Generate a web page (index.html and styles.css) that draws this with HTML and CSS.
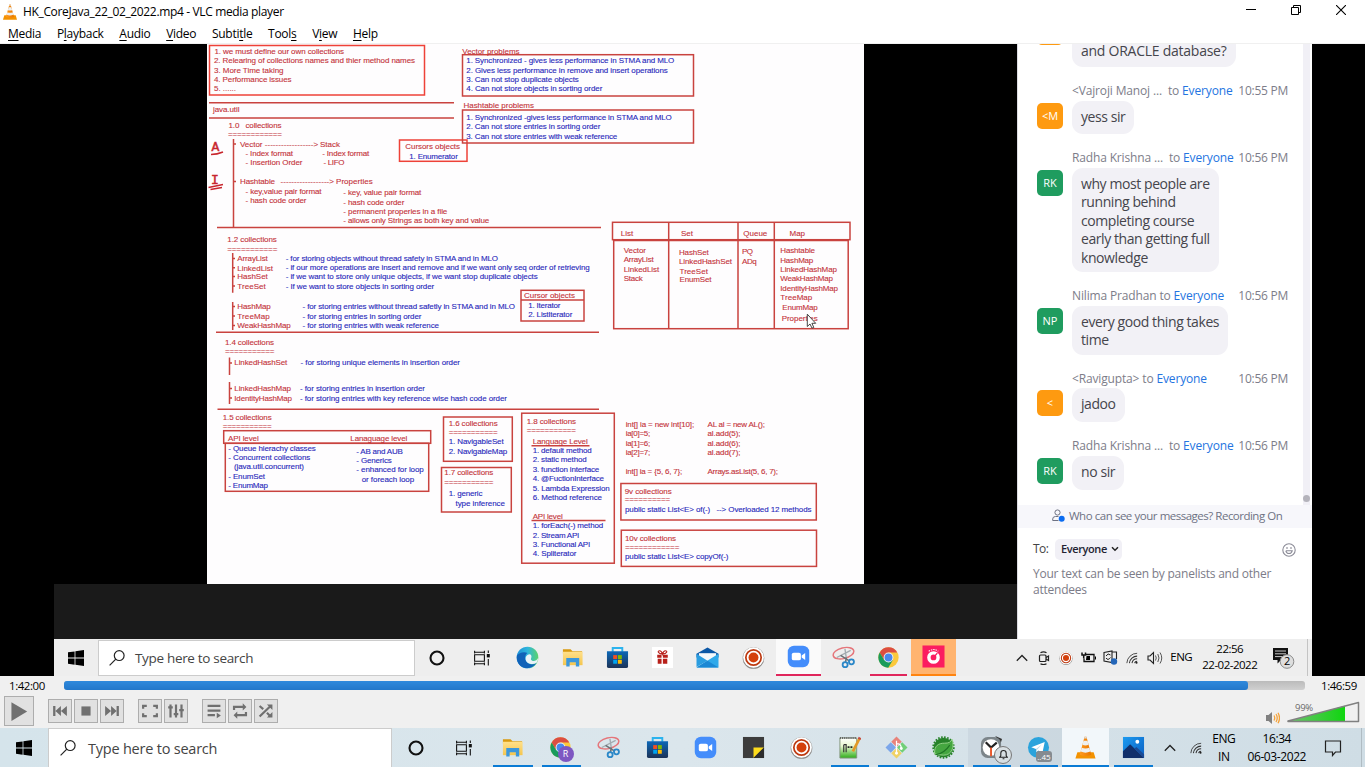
FILE: index.html
```html
<!DOCTYPE html>
<html lang="en">
<head>
<meta charset="utf-8">
<title>HK_CoreJava_22_02_2022.mp4 - VLC media player</title>
<link rel="stylesheet" href="styles.css">
</head>
<body>
<svg class="defs" aria-hidden="true">
  <defs>
    <linearGradient id="gEdge" x1="0" y1="0" x2="1" y2="0"><stop offset="0" stop-color="#1b8fd8"/><stop offset=".5" stop-color="#2fb5dc"/><stop offset="1" stop-color="#5bd36b"/></linearGradient>
    <linearGradient id="gStore" x1="0" y1="0" x2="0" y2="1"><stop offset="0" stop-color="#0c68b8"/><stop offset="1" stop-color="#1d3357"/></linearGradient>
    <linearGradient id="gFolder" x1="0" y1="0" x2="0" y2="1"><stop offset="0" stop-color="#ffe08a"/><stop offset="1" stop-color="#f5c64f"/></linearGradient>
    <linearGradient id="gCone" x1="0" y1="0" x2="1" y2="0"><stop offset="0" stop-color="#ff9a1f"/><stop offset="1" stop-color="#e87600"/></linearGradient>
    <linearGradient id="gPhoto" x1="0" y1="0" x2="1" y2="1"><stop offset="0" stop-color="#1d9bf0"/><stop offset="1" stop-color="#0a5ec2"/></linearGradient>
    <linearGradient id="gVol" x1="0" y1="0" x2="1" y2="0"><stop offset="0" stop-color="#6fbf6f"/><stop offset="1" stop-color="#0fd60f"/></linearGradient>
    <linearGradient id="gPad" x1="0" y1="0" x2="0" y2="1"><stop offset="0" stop-color="#fff"/><stop offset=".4" stop-color="#e9f7d0"/><stop offset="1" stop-color="#2fae1a"/></linearGradient>
    <symbol id="win" viewBox="0 0 16 16"><path d="M0 2.3 6.6 1.4V7.6H0zM7.4 1.3 16 0V7.6H7.4zM0 8.4H6.6V14.7L0 13.8zM7.4 8.4H16V16L7.4 14.8z"/></symbol>
    <symbol id="mag" viewBox="0 0 16 16"><g fill="none" stroke="currentColor" stroke-width="1.2"><circle cx="10.2" cy="5.6" r="4.9"/><path d="M6.8 9.2.6 15.4"/></g></symbol>
    <symbol id="ring" viewBox="0 0 16 16"><circle cx="8" cy="8" r="6.5" fill="none" stroke="#111" stroke-width="2.1"/></symbol>
    <symbol id="taskview" viewBox="0 0 16 16"><g fill="none" stroke="#111" stroke-width="1.1"><path d="M.6 3.500V.8M.6 2.200H10.400M10.400.8V3.500M.6 15.200V12.500M.6 13.800H10.400M10.400 15.200V12.500M.6 4.800H10.400V11.200H.6zM14.300.5V3M14.300 9V15.500"/><path d="M14.300 4V7.400" stroke-width="3"/></g></symbol>
    <symbol id="edge" viewBox="0 0 24 24"><circle cx="12" cy="12" r="11.300" fill="url(#gEdge)"/><path d="M1 10C3 7 8 5.400 12 7.200 9 9 8.400 14 12 17.500 15 20 19 19.500 21.400 17.600 18 24 8 25 3.500 19.600 1 16.500.500 13 1 10z" fill="#1062b8"/><path d="M12 9.500C14.500 7.500 16.800 9.500 16 12 15.500 13.500 15 14.500 17 15.400 19 16.200 22 15 23 12.600 23 15 22.500 16.500 21.400 17.600 17 20.500 10 18 10 13.500 10 11.500 10.700 10.500 12 9.500z" fill="#e9f3f8"/></symbol>
    <symbol id="folder" viewBox="0 0 24 24"><path d="M2 3.500H10L12 5.500H22V8H2z" fill="#d99a10"/><path d="M2 6H22.500V20H2z" fill="url(#gFolder)"/><path d="M5.500 21.500V12.500H19V21.500H15.500V17H9V21.500z" fill="#3b97dc"/></symbol>
    <symbol id="store" viewBox="0 0 24 24"><path d="M7 6V2H17V6" fill="none" stroke="#2bb3ee" stroke-width="2"/><path d="M1 5.500H23V21Q23 23 21 23H3Q1 23 1 21z" fill="url(#gStore)"/><path d="M7.500 9.500H11.600V13.600H7.500z" fill="#f25022"/><path d="M12.400 9.500H16.500V13.600H12.400z" fill="#7fba00"/><path d="M7.500 14.400H11.600V18.500H7.500z" fill="#00a4ef"/><path d="M12.400 14.400H16.500V18.500H12.400z" fill="#ffb900"/></symbol>
    <symbol id="gift" viewBox="0 0 24 24"><path d="M1 1H23V23H1z" fill="#fff"/><path d="M6.500 9H11V12.300H6.500zM12.400 9H17.500V12.300H12.400zM7 13.200H11V18.500H7zM12.400 13.200H17V18.500H12.400z" fill="#b8201a"/><path d="M12 8.500C7 8 6.500 5 9 5 11 5 12 8.500 12 8.500 12 8.500 13 5 15 5 17.500 5 17 8 12 8.500z" fill="none" stroke="#b8201a" stroke-width="1.200"/></symbol>
    <symbol id="mail" viewBox="0 0 24 24"><path d="M.500 8 12 1.500 23.500 8V12H.500z" fill="#0b57a6"/><path d="M3 7.500H21V16H3z" fill="#f4f8fb"/><path d="M.500 8 12 15.500.500 22z" fill="#2a9de0"/><path d="M23.500 8V22.500H.500z" fill="#2fa9ea"/><path d="M12 15.500.500 22.500H23.500z" fill="#1b88d4"/></symbol>
    <symbol id="rec" viewBox="0 0 24 24"><circle cx="12" cy="12.500" r="11.300" fill="#8c8a88"/><circle cx="12" cy="12" r="10.800" fill="#fff"/><circle cx="12" cy="12" r="8" fill="none" stroke="#bd3a12" stroke-width="1.800"/><circle cx="12" cy="12" r="5.200" fill="#d4400c"/></symbol>
    <symbol id="zoom" viewBox="0 0 24 24"><rect x=".8" y=".8" width="22.400" height="22.400" rx="6.500" fill="#448dfb"/><rect x="5" y="8" width="9.500" height="8" rx="2" fill="#fff"/><path d="M15.300 11 19 8.300V15.700L15.300 13z" fill="#fff"/></symbol>
    <symbol id="snip" viewBox="0 0 24 24"><g fill="none"><ellipse cx="12" cy="7.500" rx="11" ry="5.600" transform="rotate(-14 12 7.500)" stroke="#e5757a" stroke-width="1.500"/><path d="M5 12 19.500 4.500M13.500 3 15 13" stroke="#a3abb0" stroke-width="1.400"/><path d="M9 9.800 18 15.500M15 12 14 17" stroke="#6b7276" stroke-width="1.600"/><circle cx="13.700" cy="19.500" r="2.600" stroke="#2a87c8" stroke-width="1.900"/><circle cx="20.300" cy="16.500" r="2.600" stroke="#2a87c8" stroke-width="1.900"/></g></symbol>
    <symbol id="chrome" viewBox="0 0 24 24"><circle cx="12" cy="12" r="10.600" fill="#fbc93c"/><path d="M2.800 6.700A10.600 10.600 0 0 1 21.200 6.700H12L7.400 14.600z" fill="#dc4e41"/><path d="M2.800 6.700A10.600 10.600 0 0 0 11.700 22.600L16.600 14.600H7.400z" fill="#1a9b5b"/><circle cx="12" cy="12" r="5.100" fill="#f1f1f1"/><circle cx="12" cy="12" r="4.100" fill="#4a88ee"/></symbol>
    <symbol id="gauge" viewBox="0 0 24 24"><path d="M.5.5H23.500V23.500H.500z" fill="#fb1d60"/><circle cx="12" cy="13" r="4.800" fill="none" stroke="#fff" stroke-width="3.600"/><path d="M12 13 16 8.500" stroke="#fb1d60" stroke-width="1.500"/><path d="M7 6.500Q12 3 17 6.500" fill="none" stroke="#fff" stroke-width="1.100" stroke-dasharray="1.500 1"/></symbol>
    <symbol id="sticky" viewBox="0 0 24 24"><path d="M1 1H23V23H1z" fill="#3c3c3c"/><path d="M12 12H23L12 23z" fill="#fddc1c"/><path d="M23 12V23H12z" fill="#2d2d2d"/></symbol>
    <symbol id="npp" viewBox="0 0 24 24"><path d="M2 2H19.500V23H2z" fill="url(#gPad)" stroke="#82957c"/><path d="M2 2H19.500" stroke="#666" stroke-width="2" stroke-dasharray="1.200 1"/><path d="M6 9V17M6 9H8.500V17" fill="none" stroke="#333" stroke-width="1.200"/><path d="M10 11.500H16" stroke="#222" stroke-width="1.800" stroke-dasharray="2 1"/><path d="M22.500 2.500 15.500 16" stroke="#e39a25" stroke-width="2.800"/><path d="M23 1.500 22 3.500" stroke="#c54a40" stroke-width="3"/></symbol>
    <symbol id="git" viewBox="0 0 24 24"><path d="M12 .5 17.500 6 12 11.500 6.500 6z" fill="#e8837a"/><path d="M6 6.500 11.500 12 6 17.500.500 12z" fill="#7ba6ea"/><path d="M18 6.500 23.500 12 18 17.500 12.500 12z" fill="#72cf78"/><path d="M12 12.500 17.500 18 12 23.500 6.500 18z" fill="#f0d264"/><path d="M12 5V18M12 8Q17 8 17 13" stroke="#fff" stroke-width="1.300" fill="none"/><circle cx="12" cy="18" r="1.500" fill="#fff"/><circle cx="17" cy="13" r="1.500" fill="#fff"/></symbol>
    <symbol id="spring" viewBox="0 0 24 24"><circle cx="12" cy="12" r="10.200" fill="#27822a"/><circle cx="12" cy="12" r="10.800" fill="none" stroke="#27822a" stroke-width="1.800" stroke-dasharray="1.700 1.500"/><path d="M2.800 18.500C2 10 7 7.500 13 7.500 17.500 7.500 19.500 6.500 21 3.500 23.500 11 21 20 12 20 8.500 20 6 19.300 2.800 18.500z" fill="#45a640" stroke="#9ed891" stroke-width=".9"/><path d="M4 19.500Q13 18 18.500 9.500" fill="none" stroke="#1f7524" stroke-width="1.200"/></symbol>
    <symbol id="clock" viewBox="0 0 24 24"><path d="M16 0 23 3 21 9z" fill="#333"/><rect x="1" y="1" width="21" height="22" rx="7" fill="#7c858a"/><circle cx="11.500" cy="12" r="8.700" fill="#fff"/><path d="M6 6.500 11.500 12 17.500 7" fill="none" stroke="#222" stroke-width="2.300"/><path d="M11.500 12V21" stroke="#e8572a" stroke-width="2"/></symbol>
    <symbol id="telegram" viewBox="0 0 24 24"><circle cx="12" cy="12" r="11" fill="#2ba3dc"/><path d="M4.500 11.800 18.500 6.200 16 18 12 15 9.800 17 9.300 13.500z" fill="#fff"/><path d="M9.300 13.500 15.500 8.800 10.500 14.400 9.800 17z" fill="#b8d8e8"/></symbol>
    <symbol id="vlc" viewBox="0 0 24 24"><path d="M3.500 17H20.500L22.500 23.500H1.500z" fill="#f39200"/><path d="M11 .8H13L18 19.500Q12 22 6 19.500z" fill="url(#gCone)"/><path d="M9.900 5H14.100L15.200 9.200Q12 10.500 8.800 9.200zM8 12.300Q12 13.800 16 12.300L17 16.200Q12 18.500 7 16.200z" fill="#edf0f1"/><path d="M11 .8H13L13.500 2.500H10.500z" fill="#ddd"/></symbol>
    <symbol id="photos" viewBox="0 0 24 24"><path d="M1 1H23V23H1z" fill="url(#gPhoto)"/><path d="M1 16 8.500 8.500 23 23H1z" fill="#12306b"/><path d="M13 13 15 11.500 23 19V23z" fill="#1b4a94"/><circle cx="16" cy="6" r="2" fill="#fff"/></symbol>
    <symbol id="chev" viewBox="0 0 12 12"><path d="M.8 8.700 6 3.500 11.200 8.700" fill="none" stroke="#222" stroke-width="1.300"/></symbol>
    <symbol id="wifi" viewBox="0 0 14 14"><g fill="none" stroke="#333" stroke-width="1.200"><path d="M1 13A12 12 0 0 1 13 1.500" stroke-width="1"/><path d="M4 13A9 9 0 0 1 13 4.800M7 13A6 6 0 0 1 13 8M10 13A3 3 0 0 1 13 10.800"/></g><circle cx="12.300" cy="12.500" r="1.200" fill="#222"/></symbol>
  </defs>
</svg>

<div class="window">
  <header class="titlebar">
    <svg class="app-icon"><use href="#vlc"/></svg>
    <span class="title">HK_CoreJava_22_02_2022.mp4 - VLC media player</span>
    <div class="window-buttons">
      <svg viewBox="0 0 10 10"><path d="M0 4.500H10" stroke="#000"/></svg>
      <svg viewBox="0 0 10 10"><path d="M.5 2.500H7.500V9.500H.500zM2.500 2.500V.5H9.500V7.500H7.500" fill="none" stroke="#000"/></svg>
      <svg viewBox="0 0 10 10"><path d="M0 0 10 10M10 0 0 10" stroke="#000" stroke-width="1.100"/></svg>
    </div>
  </header>
  <nav class="menubar">
    <span><u>M</u>edia</span><span>P<u>l</u>ayback</span><span><u>A</u>udio</span><span><u>V</u>ideo</span><span>Subti<u>t</u>le</span><span>Tool<u>s</u></span><span>V<u>i</u>ew</span><span><u>H</u>elp</span>
  </nav>

  <main class="video">
    <div class="stage">
      <div class="share">
        <svg class="board" viewBox="207 44 657 540">
          <g class="lines">
            <g class="bright">
              <rect x="209.500" y="45.500" width="215" height="49.500"/>
              <rect x="399.500" y="140" width="67.500" height="21.300"/>
            </g>
            <path d="M209 102.700H454M209 118H454M217 227.500H601M216 332.300H599M217.500 409.200H599"/>
            <path d="M233.500 139V228M233.500 144H236M233.500 181.500H236M232.700 253V292.700M232.700 302V330M232.700 258.500H235M232.700 267.800H235M232.700 276.500H235M232.700 286H235M232.700 306.500H235M232.700 316H235M232.700 325.500H235M229.500 357.500V375M229.500 382V404M229.500 363H232M229.500 388.500H232M229.500 398H232"/>
            <rect x="462.500" y="54.700" width="231" height="41.300"/>
            <rect x="462.500" y="110" width="231" height="33"/>
            <rect x="521" y="290.300" width="63" height="30.700"/><path d="M521 300H584"/>
            <rect x="612.500" y="222.300" width="237.500" height="17.400"/>
            <rect x="613.700" y="240.500" width="234.500" height="88.200"/>
            <path d="M668.700 222V328.500M738 222V328.500M774.300 222V328.500"/>
            <rect x="223.700" y="430.700" width="207" height="12.600"/>
            <rect x="225.300" y="443.300" width="203.400" height="48"/>
            <rect x="443.500" y="417" width="68.800" height="44.300"/>
            <rect x="441.500" y="467.500" width="69.800" height="44.500"/>
            <rect x="521.700" y="413.200" width="92.600" height="150"/>
            <path d="M531.500 445.700H589.500M531.500 520.500H605.500"/>
            <rect x="620.900" y="483.500" width="195.400" height="36.500"/>
            <rect x="621.300" y="530.200" width="195.200" height="36.200"/>
            <path class="pen" d="M211 154.500Q217 154.500 223 152M208.500 187.500 223 184.500M210.500 189.500 222 187.500"/>
          </g>
          <text class="hand" x="211.500" y="150.500">A</text>
          <text class="hand" x="211" y="184">I</text>
          <g class="red">
            <text x="214.500" y="54" textLength="129.500">1. we must define our own collections</text>
            <text x="214" y="63.300" textLength="201">2. Relearing of collections names and thier method names</text>
            <text x="214" y="72.700" textLength="69.500">3. More Time taking</text>
            <text x="214" y="82" textLength="77.500">4. Performance issues</text>
            <text x="214" y="91.300" textLength="22">5. ......</text>
            <text x="213" y="112" textLength="26.500">java.util</text>
            <text x="228.500" y="127.500" textLength="53">1.0 &#160; collections</text>
            <text x="228" y="136.500" textLength="54">============</text>
            <text x="240" y="146.500" textLength="22.500">Vector</text>
            <text x="264.700" y="146.500" textLength="53.500">------------------&gt;</text>
            <text x="320" y="146.500" textLength="20">Stack</text>
            <text x="245.500" y="155.700" textLength="47.500">- Index format</text>
            <text x="322.300" y="155.500" textLength="47">- Index format</text>
            <text x="245.500" y="165" textLength="57">- Insertion Order</text>
            <text x="323.500" y="165" textLength="21">- LIFO</text>
            <text x="240" y="184.300" textLength="35">Hashtable</text>
            <text x="280.500" y="184.300" textLength="53.500">------------------&gt;</text>
            <text x="336" y="184.300" textLength="36.800">Properties</text>
            <text x="245.500" y="193.500" textLength="76">- key,value pair format</text>
            <text x="245.500" y="203.300" textLength="61">- hash code order</text>
            <text x="343.300" y="195" textLength="78">- key, value pair format</text>
            <text x="343.300" y="204.500" textLength="61">- hash code order</text>
            <text x="343.300" y="213.800" textLength="104">- permanent properies in a file</text>
            <text x="343.300" y="223.200" textLength="146">- allows only Strings as both key and value</text>
            <text x="405.300" y="149" textLength="54.700">Cursors objects</text>
            <text x="462.300" y="53.700" textLength="57.200">Vector problems</text>
            <text x="463.500" y="108.300" textLength="70.500">Hashtable problems</text>
            <text x="227.300" y="242.300" textLength="49.500">1.2 collections</text>
            <text x="227.300" y="251.500" textLength="50">===========</text>
            <text x="237.300" y="261" textLength="30.500">ArrayList</text>
            <text x="237.300" y="270.500" textLength="35.700">LinkedList</text>
            <text x="237.300" y="279" textLength="30.500">HashSet</text>
            <text x="237.300" y="289" textLength="28.500">TreeSet</text>
            <text x="237.300" y="309.200" textLength="33.500">HashMap</text>
            <text x="237.300" y="318.700" textLength="32.500">TreeMap</text>
            <text x="237.300" y="328" textLength="53.500">WeakHashMap</text>
            <text x="524" y="298" textLength="51">Cursor objects</text>
            <text x="225" y="345.200" textLength="49">1.4 collections</text>
            <text x="225" y="354" textLength="49.500">===========</text>
            <text x="234.300" y="365.200" textLength="53">LinkedHashSet</text>
            <text x="234.300" y="391" textLength="56.700">LinkedHashMap</text>
            <text x="234.300" y="400.500" textLength="57.700">IdentityHashMap</text>
            <text x="620.700" y="236" textLength="12.500">List</text>
            <text x="681" y="236" textLength="12">Set</text>
            <text x="743.300" y="236" textLength="24">Queue</text>
            <text x="789.500" y="236" textLength="15.500">Map</text>
            <text x="623.700" y="253" textLength="22.300">Vector</text>
            <text x="623.700" y="262.300" textLength="30">ArrayList</text>
            <text x="623.700" y="271.700" textLength="35.500">LinkedList</text>
            <text x="623.700" y="281" textLength="19">Stack</text>
            <text x="679" y="255" textLength="29.700">HashSet</text>
            <text x="679" y="264.300" textLength="53">LinkedHashSet</text>
            <text x="679.500" y="274" textLength="28.500">TreeSet</text>
            <text x="679.500" y="282" textLength="32">EnumSet</text>
            <text x="742" y="253.500" textLength="11">PQ</text>
            <text x="742" y="263.500" textLength="14.700">ADq</text>
            <text x="780.300" y="253.300" textLength="34.700">Hashtable</text>
            <text x="780.300" y="262.500" textLength="33">HashMap</text>
            <text x="780.300" y="272" textLength="56.700">LinkedHashMap</text>
            <text x="780.300" y="281.300" textLength="52.700">WeakHashMap</text>
            <text x="780.300" y="290.700" textLength="57.700">IdentityHashMap</text>
            <text x="780.300" y="300" textLength="32">TreeMap</text>
            <text x="782.300" y="310" textLength="35.400">EnumMap</text>
            <text x="781.700" y="321" textLength="36">Properties</text>
            <text x="222.700" y="420" textLength="49">1.5 collections</text>
            <text x="222.700" y="428.700" textLength="49">===========</text>
            <text x="228" y="440.500" textLength="30.700">API level</text>
            <text x="350.300" y="440.500" textLength="57">Lanaguage level</text>
            <text x="448.700" y="425.500" textLength="49">1.6 collections</text>
            <text x="448.700" y="434.500" textLength="49">===========</text>
            <text x="444.300" y="475.300" textLength="49">1.7 collections</text>
            <text x="444.300" y="484.500" textLength="49">===========</text>
            <text x="526.700" y="423.700" textLength="49.300">1.8 collections</text>
            <text x="526.700" y="432.700" textLength="49.300">===========</text>
            <text x="532.700" y="443.500" textLength="55">Language Level</text>
            <text x="532.700" y="518.700" textLength="30">API level</text>
            <text x="625.700" y="426.800" textLength="68.500">int[] ia = new int[10];</text>
            <text x="625.700" y="436.200" textLength="24.500">ia[0]=5;</text>
            <text x="625.700" y="445.500" textLength="24.500">ia[1]=6;</text>
            <text x="625.700" y="454.800" textLength="24.500">ia[2]=7;</text>
            <text x="625.700" y="474" textLength="56.600">int[] ia = {5, 6, 7};</text>
            <text x="707.500" y="426.800" textLength="57.500">AL al = new AL();</text>
            <text x="707.500" y="436.200" textLength="33">al.add(5);</text>
            <text x="707.500" y="445.500" textLength="33">al.add(6);</text>
            <text x="707.500" y="454.800" textLength="33">al.add(7);</text>
            <text x="707.500" y="474" textLength="70.500">Arrays.asList(5, 6, 7);</text>
            <text x="624.700" y="493.500" textLength="47">9v collections</text>
            <text x="624.700" y="502.300" textLength="45.500">==========</text>
            <text x="625" y="541" textLength="51">10v collections</text>
            <text x="625" y="549.500" textLength="54.300">============</text>
          </g>
          <g class="blue">
            <text x="409.300" y="158.700" textLength="48.500">1. Enumerator</text>
            <text x="466.300" y="63.200" textLength="208">1. Synchronized - gives less performance in STMA and MLO</text>
            <text x="466.300" y="72.700" textLength="201.500">2. Gives less performance in remove and insert operations</text>
            <text x="466.300" y="82" textLength="112.500">3. Can not stop duplicate objects</text>
            <text x="466.300" y="91.200" textLength="136">4. Can not store objects in sorting order</text>
            <text x="466.300" y="119.700" textLength="205.500">1. Synchronized -gives less performance in STMA and MLO</text>
            <text x="466.300" y="129" textLength="134">2. Can not store entries in sorting order</text>
            <text x="466.300" y="138.500" textLength="151">3. Can not store entries with weak reference</text>
            <text x="285.700" y="260.700" textLength="212.300">- for storing objects without thread safety in STMA and in MLO</text>
            <text x="285.700" y="270" textLength="304">- if our more operations are insert and remove and if we want only seq order of retrieving</text>
            <text x="285.700" y="279.300" textLength="252">- if we want to store only unique objects, if we want stop duplicate objects</text>
            <text x="285.700" y="288.700" textLength="148.500">- If we want to store objects in sorting order</text>
            <text x="302.500" y="309.200" textLength="212.500">- for storing entries without thread safetly in STMA and in MLO</text>
            <text x="302.500" y="318.700" textLength="119">- for storing entries in sorting order</text>
            <text x="302.500" y="328" textLength="136.500">- for storing entries with weak reference</text>
            <text x="528.300" y="308" textLength="32">1. Iterator</text>
            <text x="528.300" y="317" textLength="44">2. ListIterator</text>
            <text x="300.500" y="365.200" textLength="159.500">- for storing unique elements in insertion order</text>
            <text x="300" y="391" textLength="125">- for storing entries in insertion order</text>
            <text x="300" y="400.500" textLength="207">- for storing entries with key reference wise hash code order</text>
            <text x="228.300" y="450.500" textLength="87.500">- Queue hierachy classes</text>
            <text x="228.300" y="460" textLength="82">- Concurrent collections</text>
            <text x="234" y="469.300" textLength="70">(java.util.concurrent)</text>
            <text x="228.300" y="478.700" textLength="36.700">- EnumSet</text>
            <text x="228.300" y="488" textLength="39.700">- EnumMap</text>
            <text x="356.300" y="453.500" textLength="46.500">- AB and AUB</text>
            <text x="356.300" y="463" textLength="35.500">- Generics</text>
            <text x="356.300" y="472.300" textLength="67.500">- enhanced for loop</text>
            <text x="361.700" y="481.500" textLength="52.500">or foreach loop</text>
            <text x="448.700" y="444" textLength="55">1. NavigableSet</text>
            <text x="448.700" y="453.500" textLength="58.500">2. NavigableMap</text>
            <text x="448.700" y="496.300" textLength="33.700">1. generic</text>
            <text x="455.500" y="505.500" textLength="49.500">type inference</text>
            <text x="532.700" y="453" textLength="59">1. default method</text>
            <text x="532.700" y="462.300" textLength="54">2. static method</text>
            <text x="532.700" y="471.700" textLength="66.500">3. function interface</text>
            <text x="532.700" y="481" textLength="71.300">4. @FuctionInterface</text>
            <text x="532.700" y="490.500" textLength="77">5. Lambda Expression</text>
            <text x="532.700" y="499.800" textLength="69.300">6. Method reference</text>
            <text x="532.700" y="528.200" textLength="70.500">1. forEach(-) method</text>
            <text x="532.700" y="537.500" textLength="46.600">2. Stream API</text>
            <text x="532.700" y="547" textLength="57.500">3. Functional API</text>
            <text x="532.700" y="556.300" textLength="43.700">4. Spliterator</text>
            <text x="625" y="512.300" textLength="186.500">public static List&lt;E&gt; of(-) &#160; --&gt; Overloaded 12 methods</text>
            <text x="625" y="559.300" textLength="103.500">public static List&lt;E&gt; copyOf(-)</text>
          </g>
          <path d="M807.300 314.200V326.500L810 324 812 328.200 813.800 327.400 811.900 323.300H815.700z" fill="#fff" stroke="#333" stroke-width=".9"/>
        </svg>
      </div>

      <aside class="chat">
        <div class="feed">
          <div class="messages">
            <article class="msg first"><i class="avatar orange"></i><div><p class="bubble">and ORACLE database?</p></div></article>
            <article class="msg"><i class="avatar orange">&lt;M</i><div><header><span>&lt;Vajroji Manoj ... &#160;to <b>Everyone</b></span><time>10:55 PM</time></header><p class="bubble">yess sir</p></div></article>
            <article class="msg"><i class="avatar">RK</i><div><header><span>Radha Krishna ... &#160;to <b>Everyone</b></span><time>10:56 PM</time></header><p class="bubble tall">why most people are<br>running behind<br>completing course<br>early than getting full<br>knowledge</p></div></article>
            <article class="msg"><i class="avatar">NP</i><div><header><span>Nilima Pradhan to <b>Everyone</b></span><time>10:56 PM</time></header><p class="bubble tall">every good thing takes<br>time</p></div></article>
            <article class="msg"><i class="avatar orange">&lt;</i><div><header><span>&lt;Ravigupta&gt; to <b>Everyone</b></span><time>10:56 PM</time></header><p class="bubble">jadoo</p></div></article>
            <article class="msg"><i class="avatar">RK</i><div><header><span>Radha Krishna ... &#160;to <b>Everyone</b></span><time>10:56 PM</time></header><p class="bubble">no sir</p></div></article>
          </div>
          <div class="track"><i></i></div>
        </div>
        <div class="privacy">
          <svg viewBox="0 0 13 13"><g fill="none" stroke="#6e7283"><circle cx="5.500" cy="3.500" r="2.600"/><path d="M6.500 11.500H.700V10Q.700 7.500 3.500 7.500H6.500"/></g><circle cx="9.700" cy="9.800" r="3" fill="#0b6cf0"/></svg>
          <span>Who can see your messages? Recording On</span>
        </div>
        <div class="compose">
          <div class="to-row"><span class="to">To:</span><span class="pill">Everyone<svg viewBox="0 0 8 6"><path d="M1 1.300 4 4.300 7 1.300" fill="none" stroke="#222" stroke-width="1.500"/></svg></span>
            <svg class="smile" viewBox="0 0 14 14"><g fill="none" stroke="#8b8b97" stroke-width="1.100"><circle cx="7" cy="7" r="6.200"/><path d="M3.800 7.800H10.200Q9.500 10.500 7 10.500T3.800 7.800M5 4V6M9 4V6"/></g></svg></div>
          <p>Your text can be seen by panelists and other<br>attendees</p>
        </div>
      </aside>
    </div>

    <div class="taskbar inner">
      <div class="start"><svg><use href="#win"/></svg></div>
      <div class="search"><svg><use href="#mag"/></svg><span>Type here to search</span></div>
      <div class="apps">
        <div><svg class="sm"><use href="#ring"/></svg></div>
        <div><svg class="sm"><use href="#taskview"/></svg></div>
        <div><svg><use href="#edge"/></svg></div>
        <div><svg><use href="#folder"/></svg></div>
        <div><svg><use href="#store"/></svg></div>
        <div><svg><use href="#gift"/></svg></div>
        <div><svg><use href="#mail"/></svg></div>
        <div><svg><use href="#rec"/></svg></div>
        <div class="active"><svg><use href="#zoom"/></svg></div>
        <div><svg><use href="#snip"/></svg></div>
        <div class="running"><svg><use href="#chrome"/></svg></div>
        <div class="alert"><svg><use href="#gauge"/></svg></div>
      </div>
      <div class="tray">
        <div><svg class="t12"><use href="#chev"/></svg></div>
        <div><svg class="t14" viewBox="0 0 14 14"><g fill="none" stroke="#222" stroke-width="1.200"><rect x="2.500" y="4" width="6.500" height="6.500" rx="1"/><path d="M9 6.500 11.500 5V9.500L9 8M3.500 1.800Q6.500-.2 9.500 1.800M3.500 12.700Q6.500 14.500 9.500 12.700"/></g></svg></div>
        <div><svg class="t14"><use href="#rec"/></svg></div>
        <div><svg class="t15" viewBox="0 0 15 12"><path d="M1 1V3.500H4.500V1M2.700 3.500V7" fill="none" stroke="#111" stroke-width="1.500"/><path d="M5 3H13V10H3V7" fill="none" stroke="#111" stroke-width="1.300"/><path d="M5.500 4.500H9V8.500H5zM14 5H15V8H14z"/></svg></div>
        <div><svg class="t15" viewBox="0 0 15 15"><path d="M1 2.500 9 1V12.500L1 11zM9 2H13.500V9" fill="none" stroke="#222" stroke-width="1.100"/><path d="M3 6Q5 2.500 7.500 5M7.500 7.500Q5 11 3 8" fill="none" stroke="#222"/><circle cx="11" cy="11.500" r="3.200" fill="#2466b8"/></svg></div>
        <div><svg class="t12"><use href="#wifi"/></svg></div>
        <div><svg class="t16" viewBox="0 0 16 14"><path d="M1 5H3L6.500 1.500V12.500L3 9H1z" fill="none" stroke="#222" stroke-width="1.100"/><path d="M8.500 4.500Q10 7 8.500 9.500M10.800 3Q13.200 7 10.800 11M13 1.500Q16.500 7 13 12.500" fill="none" stroke="#555"/></svg></div>
        <span class="lang">ENG</span>
        <div class="datetime">22:56<br>22-02-2022</div>
        <div class="notify"><svg viewBox="0 0 24 22"><path d="M1 1H16V13H9L5.500 16.500V13H1z" fill="#111"/><path d="M3 4H14M3 6.800H14M3 9.600H11" stroke="#ddd" stroke-width=".9"/><circle cx="15" cy="14.500" r="6.800" fill="#dedede" stroke="#8a8a8a"/><text x="12" y="18.300">2</text></svg></div>
      </div>
    </div>
  </main>

  <section class="seek"><span class="elapsed">1:42:00</span><div class="slider"><i style="width:95.4%"></i></div><span>1:46:59</span></section>
  <section class="controls">
    <button class="play"><svg viewBox="0 0 24 24"><path d="M5.500 4.500V20.500L19 12.500z"/></svg></button>
    <div class="group">
      <button><svg viewBox="0 0 24 24"><path d="M4.500 6.500H7V17.500H4.500zM13 6.500V17.500L7 12zM19.500 6.500V17.500L13 12z"/></svg></button>
      <button><svg viewBox="0 0 24 24"><path d="M7 7H17V17H7z"/></svg></button>
      <button><svg viewBox="0 0 24 24"><path d="M4.500 6.500V17.500L11 12zM11 6.500V17.500L17 12zM17 6.500H19.500V17.500H17z"/></svg></button>
    </div>
    <div class="group">
      <button><svg class="stroke" viewBox="0 0 24 24"><path d="M4.500 9.500V6.500H8.500M15.500 6.500H19.500V9.500M19.500 14.500V17.500H15.500M8.500 17.500H4.500V14.500"/></svg></button>
      <button><svg class="stroke" viewBox="0 0 24 24"><path d="M6 5V19M12 5V19M18 5V19M3.500 8H8.500M9.500 15.500H14.500M15.500 11H20.500"/></svg></button>
    </div>
    <div class="group">
      <button><svg class="stroke" viewBox="0 0 24 24"><path d="M5 6.500H19M5 11.500H19M5 16.500H13"/><path class="solid" d="M15 14V20L19.500 17z"/></svg></button>
      <button><svg class="stroke" viewBox="0 0 24 24"><path d="M5.500 11V7.500H16M18.500 13V16.500H8"/><path class="solid" d="M15 3.500V11.500L19 7.500zM9 12.500V20.500L5 16.500z"/></svg></button>
      <button><svg class="stroke" viewBox="0 0 24 24"><path d="M5 18 17 6.500M5 6.500 9 10M13 14 17 18"/><path class="solid" d="M13 5H19V11zM19 13V19H13z"/></svg></button>
    </div>
    <div class="volume">
      <svg class="speaker" viewBox="0 0 14 12"><path d="M0 3H2.500L6 0V12L2.500 9H0z" fill="#808080"/><path d="M8 3.500Q9.500 6 8 8.500M10 2Q12.500 6 10 10M12 .8Q15 6 12 11.200" fill="none" stroke="#f5a33a" stroke-width="1.300"/></svg>
      <svg class="wedge" viewBox="0 0 75 24"><path d="M3 21 59 5.800V21z" fill="url(#gVol)"/><path d="M2 21 72.500 2.500V21.500H2z" fill="none" stroke="#808080" stroke-width="1.500" stroke-linejoin="round"/><text x="9" y="10.800">99%</text></svg>
    </div>
  </section>

  <footer class="taskbar outer">
    <div class="start"><svg><use href="#win"/></svg></div>
    <div class="search"><svg><use href="#mag"/></svg><span>Type here to search</span></div>
    <div class="apps">
      <div><svg class="sm"><use href="#ring"/></svg></div>
      <div><svg class="sm"><use href="#taskview"/></svg></div>
      <div class="running"><svg><use href="#folder"/></svg></div>
      <div class="running"><svg><use href="#chrome"/></svg><b class="badge user">R</b></div>
      <div><svg><use href="#snip"/></svg></div>
      <div><svg><use href="#store"/></svg></div>
      <div><svg><use href="#zoom"/></svg></div>
      <div><svg><use href="#sticky"/></svg></div>
      <div><svg><use href="#rec"/></svg></div>
      <div class="running"><svg><use href="#npp"/></svg></div>
      <div class="running"><svg><use href="#git"/></svg></div>
      <div class="running"><svg><use href="#spring"/></svg></div>
      <div class="running shade"><svg><use href="#clock"/></svg><b class="badge bell"><svg viewBox="0 0 10 12"><path d="M.8 9H9.200L8 7.500V4.500Q8 1.500 5 1.500T2 4.500V7.500zM4 10.800H6" fill="none" stroke="#222" stroke-width="1.200"/></svg></b></div>
      <div class="running shade"><svg><use href="#telegram"/></svg><b class="badge count">..45</b></div>
      <div class="running active"><svg><use href="#vlc"/></svg></div>
      <div class="running"><svg><use href="#photos"/></svg></div>
    </div>
    <div class="tray">
      <div><svg class="t12"><use href="#chev"/></svg></div>
      <div class="net"><svg class="t12"><use href="#wifi"/></svg></div>
      <div class="lang">ENG<br>IN</div>
      <div class="datetime">16:34<br>06-03-2022</div>
      <div class="notify"><svg viewBox="0 0 18 18"><path d="M1.500 2H16.500V13H11.500L8.500 16.500V13H1.500z" fill="none" stroke="#222" stroke-width="1.200"/></svg></div>
      <div class="peek"></div>
    </div>
  </footer>
</div>
</body>
</html>
```
FILE: styles.css
```css
* { box-sizing: border-box; }
body { margin: 0; overflow: hidden; font-family: "Open Sans", "Noto Sans", sans-serif; font-size: 12px; color: #000; }
p { margin: 0; }
svg { display: block; }
.defs { position: absolute; width: 0; height: 0; }
.window { display: flex; flex-direction: column; width: 1365px; height: 767px; background: #f0f0f0; }

/* title and menu */
.titlebar { display: flex; align-items: center; height: 23px; background: #fff; padding-left: 2px; }
.app-icon { width: 16px; height: 16px; }
.title { margin-left: 5px; font-size: 12px; letter-spacing: -.35px; white-space: nowrap; }
.window-buttons { display: flex; margin-left: auto; padding: 0 19px 3px 0; gap: 35px; }
.window-buttons svg { width: 10px; height: 10px; }
.menubar { display: flex; align-items: center; height: 21px; padding-left: 8px; gap: 15.700px; background: #fff; border-bottom: 1px solid #f0f0f0; letter-spacing: -.28px; white-space: nowrap; }
.menubar u { text-underline-offset: 2px; }

/* video */
.video { display: flex; flex-direction: column; height: 632px; padding: 0 53px 0 54px; background: #000; }
.stage { display: flex; height: 595px; }
.share { flex: 1; padding-left: 153px; background: linear-gradient(#000 540px, #1a1a1a 540px); }
.board { width: 657px; height: 540px; background: #fefdfe; font: 8px "Liberation Sans", Arial, sans-serif; }
.board .lines { fill: none; stroke: #c9433f; stroke-width: 1.5; }
.board .bright { stroke: #ee4238; }
.board .pen { stroke: #c8262d; stroke-width: 1.4; }
.board .red { fill: #c4343c; stroke: #c4343c; stroke-width: .12; }
.board .blue { fill: #2a2abb; stroke: #2a2abb; stroke-width: .12; }
.board .hand { font: 13px "Liberation Mono", monospace; fill: #c8262d; stroke: #c8262d; stroke-width: .5; }

/* chat */
.chat { display: flex; flex-direction: column; width: 295px; background: #fff; border-left: 1px solid #dcdce2; }
.feed { display: flex; height: 461px; overflow: hidden; }
.messages { width: 285px; padding-left: 19px; }
.track { width: 7px; background: #f1f0f6; height: 461px; padding-top: 451px; }
.track i { display: block; width: 7px; height: 7px; border-radius: 50%; background: #b4b3bb; }
.msg { display: grid; grid-template-columns: 35px 251px; align-items: start; }
.msg header { display: flex; justify-content: space-between; width: 216px; height: 33.500px; padding-top: 15px; line-height: 17px; color: #7d7d89; font-size: 12px; white-space: nowrap; letter-spacing: -.15px; }
.msg header b { font-weight: 400; color: #2374e1; }
.msg header time { letter-spacing: -.25px; }
.avatar { width: 26px; height: 26px; margin-top: 35.500px; border-radius: 5px; background: #1f9c5f; color: #fff; font: normal 11px/25px "Open Sans", sans-serif; text-align: center; }
.avatar.orange { background: #fe9a10; }
.bubble { display: inline-block; vertical-align: top; padding: 7px 9px 8.500px; border-radius: 11px; background: #f2f1f6; color: #45454c; font-size: 14px; line-height: 18.400px; letter-spacing: -.42px; white-space: nowrap; }
.bubble.tall { padding-bottom: 5.300px; }
.msg.first { height: 23px; }
.msg.first .bubble { margin-top: -2px; padding: 0 9px 6.600px; border-radius: 0 0 11px 11px; letter-spacing: -.25px; }
.msg.first .avatar { margin-top: -25px; }
.privacy { display: flex; align-items: center; gap: 4px; height: 23px; padding: 0 0 2px 34px; background: #f7f7fb; color: #6e7283; font-size: 11.500px; letter-spacing: -.52px; word-spacing: .3px; white-space: nowrap; }
.privacy svg { width: 13px; height: 13px; }
.compose { padding: 11px 16px 0 15px; }
.to-row { display: flex; align-items: center; height: 21px; color: #444; line-height: 16px; }
.to { width: 22px; padding-bottom: 1px; letter-spacing: -.5px; }
.pill { display: flex; align-items: center; gap: 4px; height: 21px; width: 67px; padding: 0 0 1px 6px; border-radius: 5px; background: #f1f0f6; color: #232333; font-weight: 600; font-size: 11px; letter-spacing: -.4px; }
.pill svg { width: 8px; height: 6px; }
.smile { width: 14px; height: 14px; margin-left: auto; }
.compose p { margin-top: 6px; color: #7c7c88; font-size: 12px; line-height: 16px; letter-spacing: -.23px; white-space: nowrap; }

/* taskbars */
.taskbar { display: flex; }
.start { display: flex; align-items: center; justify-content: center; }
.start svg { width: 16px; height: 16px; }
.search { display: flex; align-items: center; background: #fff; border: 1px solid #ccc; color: #444; white-space: nowrap; }
.search svg { width: 16px; height: 16px; color: #222; }
.apps { display: flex; }
.apps > div { position: relative; display: flex; flex-direction: column; align-items: center; justify-content: center; }
.apps svg { width: 23px; height: 23px; }
.apps svg.sm { width: 16px; height: 16px; }
.tray { display: flex; align-items: center; flex: 1; font-size: 11.500px; letter-spacing: -.3px; white-space: nowrap; }
.tray > div { display: flex; justify-content: center; }
.t12 { width: 12px; height: 12px; }
.t14 { width: 14px; height: 14px; }
.t15 { width: 15px; height: 15px; }
.t16 { width: 16px; height: 14px; }
.tray .datetime, .tray .lang { display: block; text-align: center; line-height: 16px; }

.inner { height: 37px; background: #eeeeee; }
.inner .start { width: 44px; }
.inner .search { width: 317px; padding-left: 10px; gap: 10px; height: 36px; margin-top: 1px; font-size: 13.500px; letter-spacing: -.32px; }
.inner .apps { margin-left: -.8px; }
.inner .apps > div { width: 45.200px; }
.inner .apps .active { background: #fafafa; border-bottom: 2px solid #e0265c; }
.inner .apps .running::after { content: ""; position: absolute; left: 4px; right: 4px; bottom: 0; height: 2px; background: #e0265c; }
.inner .apps .alert { background: #ffb470; border-bottom: 2px solid #ff8410; }
.inner .tray { padding-left: 54px; margin-right: 4px; border-right: 1px solid #c4c4c4; letter-spacing: -.5px; }
.inner .tray > div { flex: none; width: 22.200px; }
.inner .tray .lang { width: 25px; margin-left: 3px; padding-bottom: 1px; }
.inner .tray > .datetime { width: 66px; margin-left: 3px; padding-bottom: 1px; }
.inner .tray > .notify { width: 24px; margin-left: 9px; }
.notify text { font-size: 11px; }
.inner .notify svg { width: 24px; height: 22px; }

.outer { height: 39px; background: linear-gradient(90deg, #d5e4eb, #dbe6ec 50%, #cfdde5); }
.outer .start { width: 48px; }
.outer .search { width: 344px; padding-left: 11px; gap: 12px; border-bottom: 0; font-size: 14.500px; letter-spacing: -.22px; }
.outer .apps > div { width: 47.300px; }
.outer .apps > div:nth-child(-n+9) { width: 48.200px; }
.outer .apps .running::after { content: ""; position: absolute; left: 5px; right: 4px; bottom: 0; height: 2px; background: #0a7bd4; }
.outer .apps .shade { background: rgba(190, 203, 212, .4); }
.outer .apps .active { background: #f2f7fa; }
.outer .apps .active::after { left: 0; right: 0; }
.badge { position: absolute; font-weight: 400; color: #fff; }
.badge.user { left: 21px; top: 18px; width: 16px; height: 16px; border-radius: 50%; background: #7e57c2; font-size: 9px; line-height: 16px; text-align: center; }
.badge.bell { left: 26px; top: 18px; width: 18px; height: 18px; border: 1px solid #777; border-radius: 50%; background: #d8dfe3; padding: 2px 4px; }
.badge.bell svg { width: 9px; height: 11px; }
.badge.count { left: 21px; top: 23px; width: 16px; height: 11px; border-radius: 3px; background: #858b90; font-size: 8px; line-height: 11px; text-align: center; }
.outer .tray { font-size: 12px; letter-spacing: -.4px; }
.outer .tray > div { flex: none; width: 26px; }
.outer .tray > .lang { width: 30px; margin-left: 0; }
.outer .tray > .datetime { width: 66px; margin-left: 5px; }
.outer .tray > .notify { width: 18px; margin-left: 14px; }
.outer .tray > .peek { width: 1px; height: 39px; margin-left: 19px; background: #b0bcc3; }
.outer .datetime, .outer .lang { line-height: 17.500px !important; }
.outer .notify svg { width: 18px; height: 18px; }

/* player controls */
.seek { display: flex; align-items: flex-end; height: 17px; padding: 0 6px 0 9px; font-size: 11.500px; line-height: 15px; letter-spacing: -.45px; white-space: nowrap; }
.elapsed { width: 55px; }
.slider { width: 1241px; height: 9px; margin: 0 16px 3px 0; border-radius: 3px; background: linear-gradient(#bbb, #d0d0d0); }
.slider i { display: block; height: 9px; border-radius: 3px; background: linear-gradient(#2f89dc, #2277ca); }
.controls { display: flex; align-items: center; height: 35px; padding: 0 4px; }
.controls button { width: 24px; height: 24px; padding: 0; border: 1px solid #adadad; background: #e1e1e1; }
.controls button svg { width: 22px; height: 22px; fill: #707070; }
.controls .stroke { fill: none !important; stroke: #707070; stroke-width: 2.400; }
.controls .solid { fill: #707070; stroke: none; }
.controls .play { width: 30px; height: 30px; }
.controls .play svg { width: 28px; height: 28px; }
.group { display: flex; gap: 2px; margin-left: 14px; }
.volume { display: flex; align-items: flex-end; gap: 6px; margin-left: auto; height: 26px; }
.speaker { width: 14px; height: 12px; }
.wedge { width: 75px; height: 24px; }
.wedge text { font-size: 9.500px; fill: #6a6a6a; letter-spacing: -.3px; }
```
